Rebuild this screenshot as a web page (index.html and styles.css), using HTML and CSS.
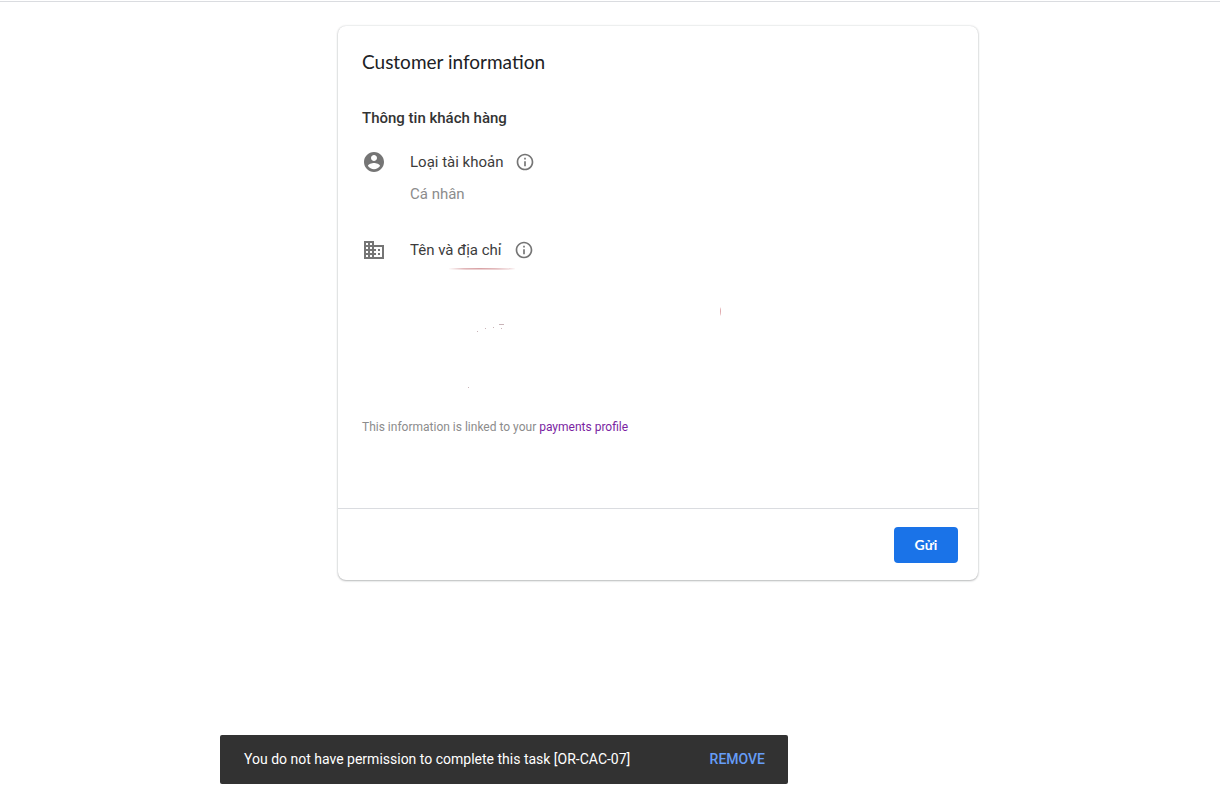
FILE: index.html
```html
<!DOCTYPE html>
<html lang="vi">
<head>
<meta charset="utf-8">
<meta name="viewport" content="width=device-width, initial-scale=1">
<title>Customer information</title>
<link rel="stylesheet" href="styles.css">
</head>
<body>
<main class="page">
  <section class="card">
    <div class="card-body">
      <h1 class="title">Customer information</h1>
      <h2 class="subtitle">Thông tin khách hàng</h2>
      <div class="field">
        <svg class="icon" viewBox="0 0 24 24" aria-hidden="true"><path d="M12 2C6.480 2 2 6.480 2 12s4.480 10 10 10 10-4.480 10-10S17.520 2 12 2zm0 3c1.660 0 3 1.340 3 3s-1.340 3-3 3-3-1.340-3-3 1.340-3 3-3zm0 14.200c-2.500 0-4.710-1.280-6-3.220.030-1.990 4-3.080 6-3.080 1.990 0 5.970 1.090 6 3.080-1.290 1.940-3.500 3.220-6 3.220z"/></svg>
        <div class="field-content">
          <div class="label">Loại tài khoản
            <button class="info" type="button" aria-label="Loại tài khoản"><svg viewBox="0 0 24 24" aria-hidden="true"><path d="M11 7h2v2h-2zm0 4h2v6h-2zm1-9C6.480 2 2 6.480 2 12s4.480 10 10 10 10-4.480 10-10S17.520 2 12 2zm0 18c-4.410 0-8-3.590-8-8s3.590-8 8-8 8 3.590 8 8-3.590 8-8 8z"/></svg></button>
          </div>
          <div class="value">Cá nhân</div>
        </div>
      </div>
      <div class="field">
        <svg class="icon" viewBox="0 0 24 24" aria-hidden="true"><path d="M12 7V3H2v18h20V7H12zM6 19H4v-2h2v2zm0-4H4v-2h2v2zm0-4H4V9h2v2zm0-4H4V5h2v2zm4 12H8v-2h2v2zm0-4H8v-2h2v2zm0-4H8V9h2v2zm0-4H8V5h2v2zm10 12h-8v-2h2v-2h-2v-2h2v-2h-2V9h8v10zm-2-8h-2v2h2v-2zm0 4h-2v2h2v-2z"/></svg>
        <div class="field-content">
          <div class="label">Tên và địa chỉ
            <button class="info" type="button" aria-label="Tên và địa chỉ"><svg viewBox="0 0 24 24" aria-hidden="true"><path d="M11 7h2v2h-2zm0 4h2v6h-2zm1-9C6.480 2 2 6.480 2 12s4.480 10 10 10 10-4.480 10-10S17.520 2 12 2zm0 18c-4.410 0-8-3.590-8-8s3.590-8 8-8 8 3.590 8 8-3.590 8-8 8z"/></svg></button>
          </div>
          <svg class="marks" viewBox="0 0 320 130" aria-hidden="true">
            <path fill="#d9a3a6" d="M38 5q30-2 68 0-30 1-68 0z"/>
            <path fill="#dfa6aa" d="M310 43q2 4 0 9z"/>
            <path fill="#c9b4b8" d="M89 60h5v1h-5zM67 67h1v1h-1zM75 64h1v1h-1zM83 63h1v1h-1zM91 64h1v1h-1zM58 123h1v1h-1z"/>
          </svg>
        </div>
      </div>
      <p class="note">This information is linked to your <a class="link" href="#">payments profile</a></p>
    </div>
    <footer class="card-footer">
      <button class="submit" type="button">Gửi</button>
    </footer>
  </section>
</main>
<div class="snackbar" role="alert">
  <span>You do not have permission to complete this task [OR-CAC-07]</span>
  <button class="dismiss" type="button">REMOVE</button>
</div>
</body>
</html>
```
FILE: styles.css
```css
* { box-sizing: border-box; }
body {
  margin: 0;
  background: #fff;
  color: #3c3c3c;
  font-family: Roboto, "Liberation Sans", sans-serif;
}
button { border: 0; padding: 0; background: none; font: inherit; cursor: pointer; }
.page {
  display: flex;
  justify-content: center;
  margin-top: 1px;
  padding: 24px 0 24px 96px;
  border-top: 1px solid #dadce0;
}
.card {
  width: 100%;
  max-width: 640px;
  border-radius: 8px;
  background: #fff;
  box-shadow: 0 1px 2px rgba(60, 64, 67, .3), 0 0 2px rgba(60, 64, 67, .25);
}
.card-body { padding: 24px 24px 72px; }
.title {
  margin: 0;
  color: #202124;
  font: 400 19px/24px Lato, sans-serif;
}
.subtitle {
  margin: 32px 0 20px;
  color: #333;
  font-size: 15px;
  font-weight: 500;
  line-height: 24px;
}
.field { display: flex; gap: 24px; margin-bottom: 32px; }
.field + .field { margin-bottom: 0; }
.icon { flex: none; width: 24px; height: 24px; fill: #757575; }
.field-content { flex: 1; min-width: 0; }
.label {
  display: flex;
  align-items: center;
  gap: 12px;
  font-size: 15px;
  line-height: 24px;
}
.info { width: 20px; height: 20px; }
.info svg { display: block; fill: #757575; }
.value { margin-top: 8px; color: #8c8c8c; font-size: 15px; line-height: 24px; }
.marks { display: block; width: 320px; max-width: 100%; margin-top: 2px; }
.note {
  margin: 24px 0 0;
  color: #8c8c8c;
  font-size: 12px;
  line-height: 18px;
}
.link { color: #7b1fa2; text-decoration: none; }
.card-footer {
  display: flex;
  justify-content: flex-end;
  padding: 18px 20px 17px;
  border-top: 1px solid #dadce0;
}
.submit {
  min-width: 64px;
  height: 36px;
  border-radius: 4px;
  background: #1a73e8;
  color: #fff;
  font: 700 14px/36px Lato, sans-serif;
}
.snackbar {
  position: fixed;
  bottom: 14px;
  left: 220px;
  display: flex;
  align-items: center;
  justify-content: space-between;
  width: 568px;
  max-width: calc(100% - 220px);
  padding: 12px 23px 13px 24px;
  border-radius: 2px;
  background: #323232;
  color: #fff;
  font-size: 14px;
  line-height: 24px;
}
.dismiss { color: #669df6; font-weight: 500; }
```
